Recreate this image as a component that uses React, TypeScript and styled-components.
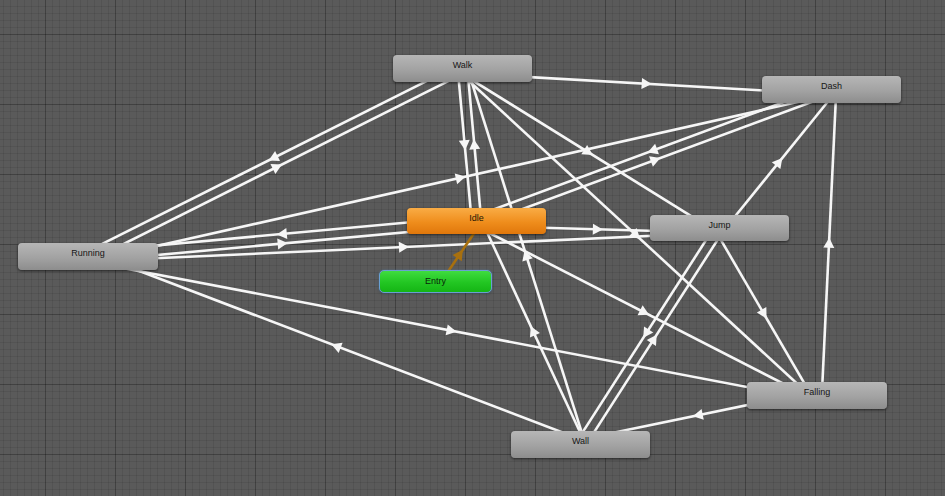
import React from 'react'
import styled, { createGlobalStyle, css } from 'styled-components'

type Kind = 'state' | 'default' | 'entry'

interface StateBox {
  id: string
  label: string
  x: number
  y: number
  w: number
  h: number
  kind: Kind
}

const STATES: StateBox[] = [
  { id: 'walk', label: 'Walk', x: 393, y: 55, w: 139, h: 27, kind: 'state' },
  { id: 'dash', label: 'Dash', x: 762, y: 76, w: 139, h: 27, kind: 'state' },
  { id: 'running', label: 'Running', x: 18, y: 243, w: 140, h: 27, kind: 'state' },
  { id: 'idle', label: 'Idle', x: 407, y: 208, w: 139, h: 26, kind: 'default' },
  { id: 'entry', label: 'Entry', x: 380, y: 271, w: 111, h: 21, kind: 'entry' },
  { id: 'jump', label: 'Jump', x: 650, y: 215, w: 139, h: 26, kind: 'state' },
  { id: 'falling', label: 'Falling', x: 747, y: 382, w: 140, h: 27, kind: 'state' },
  { id: 'wall', label: 'Wall', x: 511, y: 431, w: 139, h: 27, kind: 'state' },
]

const TRANSITIONS: [string, string][] = [
  ['walk', 'dash'],
  ['running', 'walk'],
  ['walk', 'running'],
  ['walk', 'idle'],
  ['idle', 'walk'],
  ['walk', 'jump'],
  ['walk', 'falling'],
  ['wall', 'walk'],
  ['running', 'dash'],
  ['running', 'idle'],
  ['idle', 'running'],
  ['running', 'jump'],
  ['running', 'falling'],
  ['wall', 'running'],
  ['idle', 'dash'],
  ['dash', 'idle'],
  ['idle', 'jump'],
  ['idle', 'falling'],
  ['wall', 'idle'],
  ['jump', 'wall'],
  ['wall', 'jump'],
  ['jump', 'falling'],
  ['jump', 'dash'],
  ['falling', 'dash'],
  ['falling', 'wall'],
  ['entry', 'idle'],
]

// lines are pushed to the right of their direction so A->B and B->A sit side by side
const SIDE_OFFSET = 4.8
const ARROW_LEN = 10
const ARROW_HALF = 5.5

const byId = (id: string) => STATES.find((s) => s.id === id)!
const centerOf = (s: StateBox) => ({ x: s.x + s.w / 2, y: s.y + s.h / 2 })

function edgeGeometry(from: StateBox, to: StateBox) {
  const p = centerOf(from)
  const q = centerOf(to)
  const dx = q.x - p.x
  const dy = q.y - p.y
  const len = Math.hypot(dx, dy)
  const ux = dx / len
  const uy = dy / len
  const nx = -uy * SIDE_OFFSET
  const ny = ux * SIDE_OFFSET
  const x1 = p.x + nx
  const y1 = p.y + ny
  const x2 = q.x + nx
  const y2 = q.y + ny
  const mx = (x1 + x2) / 2
  const my = (y1 + y2) / 2
  const tip = [mx + (ux * ARROW_LEN) / 2, my + (uy * ARROW_LEN) / 2]
  const bx = mx - (ux * ARROW_LEN) / 2
  const by = my - (uy * ARROW_LEN) / 2
  const left = [bx - uy * ARROW_HALF, by + ux * ARROW_HALF]
  const right = [bx + uy * ARROW_HALF, by - ux * ARROW_HALF]
  return {
    x1,
    y1,
    x2,
    y2,
    arrow: [tip, left, right].map((pt) => pt.map((v) => v.toFixed(2)).join(',')).join(' '),
  }
}

const GlobalStyle = createGlobalStyle`
  html, body {
    margin: 0;
    padding: 0;
    background: #595959;
  }
`

const Canvas = styled.div`
  position: relative;
  width: 945px;
  height: 496px;
  overflow: hidden;
  background-color: #5a5a5a;
  background-image:
    linear-gradient(to right, rgba(0, 0, 0, 0.22) 1px, transparent 1px),
    linear-gradient(to bottom, rgba(0, 0, 0, 0.22) 1px, transparent 1px),
    linear-gradient(to right, rgba(0, 0, 0, 0.08) 1px, transparent 1px),
    linear-gradient(to bottom, rgba(0, 0, 0, 0.08) 1px, transparent 1px);
  background-size: 70px 70px, 70px 70px, 7px 7px, 7px 7px;
  background-position: 45px 34px, 45px 34px, 3px 6px, 3px 6px;
  font-family: 'Liberation Sans', Arial, sans-serif;
`

const EdgeLayer = styled.svg`
  position: absolute;
  inset: 0;
  width: 945px;
  height: 496px;
`

const kindStyles = {
  state: css`
    background: linear-gradient(to bottom, #b6b6b6 0%, #a2a2a2 55%, #8d8d8d 100%);
    color: #161616;
  `,
  default: css`
    background: linear-gradient(to bottom, #f9ac45 0%, #ef8d1c 55%, #e0770b 100%);
    color: #241604;
  `,
  entry: css`
    background: linear-gradient(to bottom, #3fdc3f 0%, #22c622 55%, #15b515 100%);
    color: #0a240a;
    outline: 1px solid rgba(110, 170, 225, 0.85);
    box-shadow: 0 0 2px 1px rgba(90, 150, 210, 0.55), 0 1px 3px rgba(0, 0, 0, 0.5);
  `,
}

const StateNode = styled.div<{ $x: number; $y: number; $w: number; $h: number; $kind: Kind }>`
  position: absolute;
  left: ${({ $x }) => $x}px;
  top: ${({ $y }) => $y}px;
  width: ${({ $w }) => $w}px;
  height: ${({ $h }) => $h}px;
  box-sizing: border-box;
  padding-top: 5px;
  border-radius: 4px;
  font-size: 9px;
  line-height: 11px;
  text-align: center;
  box-shadow: 0 1px 3px rgba(0, 0, 0, 0.6);
  ${({ $kind }) => kindStyles[$kind]}
`

export default function App() {
  return (
    <>
      <GlobalStyle />
      <Canvas>
        <EdgeLayer viewBox="0 0 945 496">
          {TRANSITIONS.map(([a, b]) => {
            const g = edgeGeometry(byId(a), byId(b))
            const colour = a === 'entry' ? '#a8700e' : '#f6f6f6'
            return (
              <g key={`${a}-${b}`}>
                <line x1={g.x1} y1={g.y1} x2={g.x2} y2={g.y2} stroke={colour} strokeWidth={2.6} />
                <polygon points={g.arrow} fill={colour} />
              </g>
            )
          })}
        </EdgeLayer>
        {STATES.map((s) => (
          <StateNode key={s.id} $x={s.x} $y={s.y} $w={s.w} $h={s.h} $kind={s.kind}>
            {s.label}
          </StateNode>
        ))}
      </Canvas>
    </>
  )
}
